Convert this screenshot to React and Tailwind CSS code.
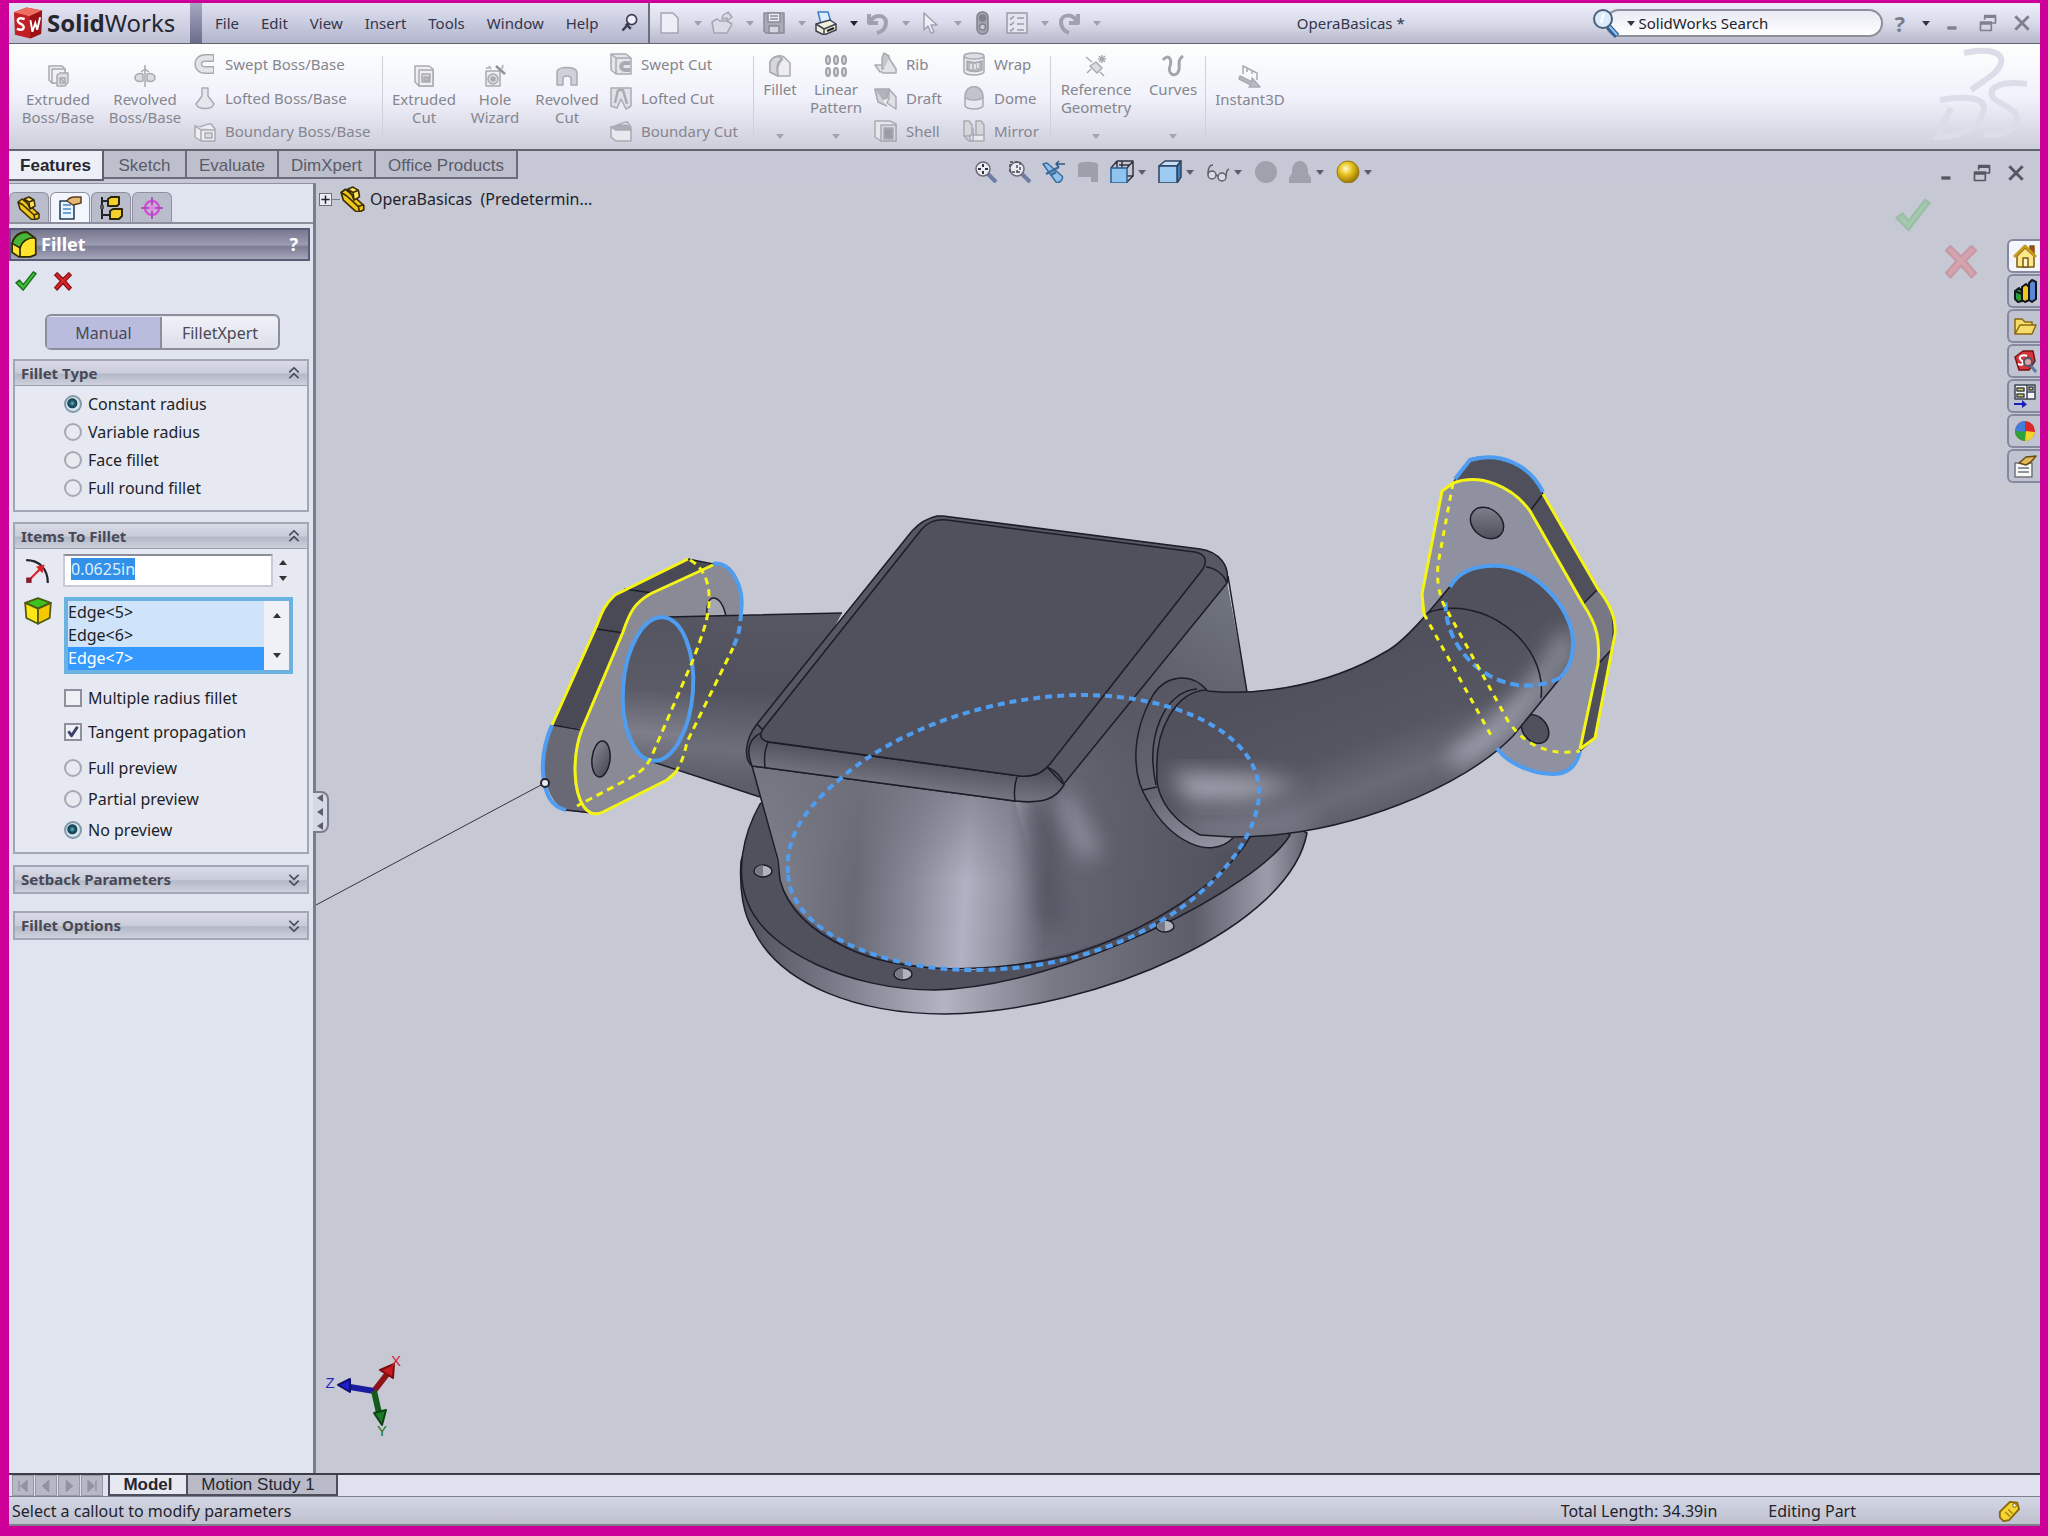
import { useEffect, useRef } from 'react';
import clsx from 'clsx';

/* ---------- small shared pieces ---------- */

function Svg({ size = 'size-6', children, className }) {
  return (
    <svg viewBox="0 0 24 24" fill="none" strokeLinejoin="round" aria-hidden="true" className={clsx('shrink-0', size, className)}>
      {children}
    </svg>
  );
}

function Caret({ className = 'text-[#85868f]' }) {
  return (
    <svg viewBox="0 0 8 5" aria-hidden="true" className={clsx('h-[5px] w-2 shrink-0', className)}>
      <path d="M0 0h8L4 5z" fill="currentColor" />
    </svg>
  );
}

/* ---------- drawings for the ribbon ---------- */

const G = '#a9aab2';
const L = '#dcdde3';

const ribbonIcons = {
  extrude: (
    <g stroke={G} strokeWidth="1.5" fill={L}>
      <path d="M3 2h13l3 3v14H6l-3-3z" fill="#f1f1f5" />
      <path d="M6 5h13v14H6z" fill="#f1f1f5" />
      <path d="M11 11l3-2h8v9l-3 4h-8z" />
      <path d="M14 14h5v5h-5zM14 14l5 5" />
    </g>
  ),
  revolve: (
    <g stroke={G} strokeWidth="1.5">
      <path d="M12 1v22" />
      <path d="M2 14c0-4 4-5 8-4v7c-5 1-8 0-8-3zM22 14c0-4-4-5-8-4v7c5 1 8 0 8-3z" fill={L} />
      <path d="M8 8l4-3 4 3" />
    </g>
  ),
  sweep: (
    <g>
      <path d="M21 6h-9c-9 0-9 12 0 12h9" stroke={G} strokeWidth="8" />
      <path d="M20 6h-8c-9 0-9 12 0 12h8" stroke="#e3e4e9" strokeWidth="5" />
    </g>
  ),
  loft: <path d="M9 2h6v8l6 8c-2 6-16 6-18 0l6-8z" fill="#e6e7ec" stroke={G} strokeWidth="1.5" />,
  boundary: (
    <g stroke={G} strokeWidth="1.5" fill={L}>
      <path d="M2 7c7 3 10-3 16-2l4 5v12H8l-6-4z" fill="#eeeef3" />
      <path d="M2 7l6 4h14M8 11v11" />
      <path d="M12 14h7v5h-7z" />
    </g>
  ),
  extrudeCut: (
    <g stroke={G} strokeWidth="1.5" fill="#eeeef3">
      <path d="M3 2h14l4 3v17H7l-4-4z" />
      <path d="M7 6h14v16H7z" />
      <path d="M10 10h8v8h-8z" fill={L} />
      <path d="M12 13h5v4h-5z" fill="#b9bac2" />
    </g>
  ),
  hole: (
    <g stroke={G} strokeWidth="1.5" fill="#eeeef3">
      <path d="M3 7h14v15H3z" />
      <circle cx="10" cy="15" r="5" fill={L} />
      <circle cx="10" cy="15" r="2" fill={G} />
      <path d="M13 2l9 8" strokeWidth="2.5" stroke="#8f9099" />
      <path d="M6 2l2 3M20 1l-1 4M3 4h3" />
    </g>
  ),
  revolveCut: (
    <path d="M2 8c0-6 19-6 20 0v13h-6v-6c0-4-8-4-8 0v6H2z" fill="#d0d1d8" stroke={G} strokeWidth="1.5" />
  ),
  sweepCut: (
    <g stroke={G} strokeWidth="1.5">
      <path d="M2 2h15l5 4v16H7l-5-4z" fill="#e4e5ea" />
      <path d="M7 6h15M7 6v16M2 2l5 4" />
      <path d="M21 11h-5c-5 0-5 7 0 7h5" strokeWidth="4" />
    </g>
  ),
  loftCut: (
    <g stroke={G} strokeWidth="1.5">
      <path d="M2 2h20v18l-5 3-5-10-4 9-6-2z" fill="#e0e1e7" />
      <path d="M9 4h5l4 14M9 4L6 17" strokeWidth="2.5" />
    </g>
  ),
  boundaryCut: (
    <g stroke={G} strokeWidth="1.5">
      <path d="M2 8c6 0 10-5 16-5l4 5v14H7l-5-4z" fill="#e8e9ee" />
      <path d="M2 8l5 3h15c-2-4-4-5-6-5-5 0-9 2-14 2z" fill="#acadb5" />
    </g>
  ),
  fillet: (
    <g stroke={G} strokeWidth="1.5">
      <path d="M2 8c3-7 10-7 14-5l6 6v13H10l-8-4z" fill="#ececf1" />
      <path d="M2 8c3-6 9-6 12-4l-4 5c-1 3-1 9 0 13l-8-4z" fill="#d6d7dd" />
      <path d="M10 22c-1-9 0-13 5-17" />
    </g>
  ),
  linear: (
    <g stroke="#a0a1aa" strokeWidth="2" fill={L}>
      <ellipse cx="4" cy="6" rx="2" ry="4" />
      <ellipse cx="12" cy="6" rx="2" ry="4" />
      <ellipse cx="20" cy="6" rx="2" ry="4" />
      <ellipse cx="4" cy="18" rx="2" ry="4" />
      <ellipse cx="12" cy="18" rx="2" ry="4" />
      <ellipse cx="20" cy="18" rx="2" ry="4" />
    </g>
  ),
  rib: (
    <g stroke={G} strokeWidth="1.5" fill="#e2e3e9">
      <path d="M1 13l5 7h16l-5-7z" />
      <path d="M10 1l5 3v13H8V6z" fill="#c4c5cd" />
      <path d="M15 6l7 11v4H8" />
    </g>
  ),
  draft: (
    <g stroke={G} strokeWidth="1.5">
      <path d="M1 3h14l-2 9-9 3z" fill="#b2b3bb" />
      <path d="M15 3l7 8v12l-9-6 2-5z" fill="#dfe0e6" />
      <path d="M1 3l3 13 9 4" fill="#d3d4da" />
    </g>
  ),
  shell: (
    <g stroke={G} strokeWidth="1.5">
      <path d="M1 2h15l6 3v17H7l-6-4z" fill="#e6e7ec" />
      <path d="M7 6h15v16H7z" fill="#d8d9df" />
      <path d="M10 9h9v11h-9z" fill="#9b9ca5" />
    </g>
  ),
  wrap: (
    <g stroke={G} strokeWidth="1.5">
      <path d="M2 4v16c3 4 17 4 20 0V4" fill="#ececf1" />
      <ellipse cx="12" cy="4" rx="10" ry="3" fill="#dcdde3" />
      <path d="M5 9c5 2 10 2 15 0v9c-5 2-10 2-15 0z" fill="#b7b8c0" />
      <path d="M9 12v5M13 12v5M16 11v5" stroke="#eee" />
    </g>
  ),
  dome: (
    <g stroke={G} strokeWidth="1.5">
      <path d="M3 11v9c3 4 15 4 18 0v-9" fill="#e8e9ee" />
      <path d="M3 11c0-14 18-14 18 0-3 4-15 4-18 0z" fill="#c3c4cb" />
    </g>
  ),
  mirror: (
    <g stroke={G} strokeWidth="1.5">
      <path d="M2 2h5l3 4v11H2zM14 2h5l3 4v11h-8z" fill="#d6d7dd" />
      <path d="M8 16h14v6H8z" fill="#e8e9ee" />
      <path d="M2 17l5 5h4V9" />
    </g>
  ),
  refGeo: (
    <g stroke={G} strokeWidth="1.5">
      <path d="M6 12l6-4 6 6-5 5z" fill={L} />
      <path d="M2 3l6 5M3 19l4-4M18 1v8M14 5h8M15 2l6 6M21 2l-6 6M16 18l4 4" />
    </g>
  ),
  curves: <path d="M2 6c6-7 9 0 7 6-3 8 6 13 9 4 1-6-2-10 4-14" stroke="#a3a4ad" strokeWidth="3" />,
  instant: (
    <g stroke={G} strokeWidth="1.5">
      <path d="M5 10V2l14 7v7M9 4v4M14 6v4" />
      <path d="M2 12l12 6v-4l8 9H11l2-2-12-6z" fill="#b9bac2" />
    </g>
  ),
};

function BigTool({ icon, lines, width, arrow, low }) {
  return (
    <button type="button" className={clsx('flex shrink-0 flex-col items-center text-center leading-[18px]', width, low ? 'pt-5' : 'pt-[10px]')}>
      <Svg className="mb-[2px]">{ribbonIcons[icon]}</Svg>
      {lines.map((l) => (
        <span key={l} className="whitespace-nowrap">{l}</span>
      ))}
      {arrow && <Caret className="mt-auto mb-[10px] text-[#a3a4ad]" />}
    </button>
  );
}

function SmallTools({ items, className }) {
  return (
    <div className={clsx('flex shrink-0 flex-col justify-between pt-2 pb-[6px]', className)}>
      {items.map(([icon, label]) => (
        <button key={label} type="button" className="flex items-center gap-2 leading-6 whitespace-nowrap">
          <Svg>{ribbonIcons[icon]}</Svg>
          {label}
        </button>
      ))}
    </div>
  );
}

function Divider() {
  return <div className="my-3 w-px shrink-0 bg-[#cfd0da]" />;
}

function Ribbon() {
  return (
    <div className="flex h-[107px] items-stretch border-b-2 border-[#62646f] bg-linear-to-b from-[#fdfffd] via-[#f1f2fb] to-[#cdcedb] text-[15px] text-[#85868e]">
      <BigTool icon="extrude" lines={['Extruded', 'Boss/Base']} width="w-[98px]" low />
      <BigTool icon="revolve" lines={['Revolved', 'Boss/Base']} width="w-[76px]" low />
      <SmallTools
        className="w-[199px] pl-[10px]"
        items={[['sweep', 'Swept Boss/Base'], ['loft', 'Lofted Boss/Base'], ['boundary', 'Boundary Boss/Base']]}
      />
      <Divider />
      <BigTool icon="extrudeCut" lines={['Extruded', 'Cut']} width="w-[82px]" low />
      <BigTool icon="hole" lines={['Hole', 'Wizard']} width="w-[60px]" low />
      <BigTool icon="revolveCut" lines={['Revolved', 'Cut']} width="w-[84px]" low />
      <SmallTools
        className="w-[144px]"
        items={[['sweepCut', 'Swept Cut'], ['loftCut', 'Lofted Cut'], ['boundaryCut', 'Boundary Cut']]}
      />
      <Divider />
      <BigTool icon="fillet" lines={['Fillet']} width="w-[52px]" arrow />
      <BigTool icon="linear" lines={['Linear', 'Pattern']} width="w-[60px]" arrow />
      <SmallTools className="w-[90px] pl-2" items={[['rib', 'Rib'], ['draft', 'Draft'], ['shell', 'Shell']]} />
      <SmallTools className="w-[94px] pl-[6px]" items={[['wrap', 'Wrap'], ['dome', 'Dome'], ['mirror', 'Mirror']]} />
      <Divider />
      <BigTool icon="refGeo" lines={['Reference', 'Geometry']} width="w-[90px]" arrow />
      <BigTool icon="curves" lines={['Curves']} width="w-[64px]" arrow />
      <Divider />
      <BigTool icon="instant" lines={['Instant3D']} width="w-[88px]" low />
      <svg viewBox="0 0 100 104" aria-hidden="true" className="mr-3 ml-auto h-[104px] w-[100px] shrink-0" fill="none" stroke="#dcdde8" strokeWidth="6">
        <path d="M36 9c24-5 40-1 37 10-2 9-12 14-30 27" />
        <path d="M12 56c34-6 48 0 43 13-4 15-22 24-46 24l14-29" />
        <path d="M99 40c-24-3-38 2-35 12 3 8 29 12 25 26-3 10-18 14-34 13" />
      </svg>
    </div>
  );
}

/* ---------- title bar ---------- */

const quickTools = [
  { name: 'New', arrow: true, art: <path d="M3 2h12l5 5v15H3z" fill="#eeeef6" stroke="#a4a5b1" strokeWidth="1.5" /> },
  {
    name: 'Open', arrow: true,
    art: <path d="M2 11l5-3 3 2h7l5 3-5 9H4zM12 8c0-4 3-6 6-6v-1l4 5-5 4V7c-2 0-3 1-5 1z" fill="#d9dae5" stroke="#a4a5b1" strokeWidth="1.5" />,
  },
  {
    name: 'Save', arrow: true,
    art: (
      <g stroke="#8b8c98" strokeWidth="1.5">
        <path d="M2 2h20v20H4l-2-2z" fill="#a9aab6" />
        <path d="M6 2h12v9H6z" fill="#eceef6" />
        <path d="M7 15h10v7H7z" fill="#d4d5df" />
        <path d="M8 5h8M8 8h8" />
      </g>
    ),
  },
  {
    name: 'Print', arrow: true, dark: true,
    art: (
      <g stroke="#3e4150" strokeWidth="1.5">
        <path d="M4 1h10l3 10-10 2z" fill="#dcecff" stroke="#3f7ac4" />
        <path d="M2 13l14-4 6 4v6l-12 5-8-4z" fill="#f1efdc" />
        <path d="M2 13l8 5 12-5M10 18v5" />
        <path d="M13 20l7-3" stroke="#222" strokeWidth="2" />
      </g>
    ),
  },
  { name: 'Undo', arrow: true, art: <path d="M3 3v9h9M4 11c4-8 15-8 16 0 0 6-4 10-9 11" stroke="#a0a1ae" strokeWidth="4" /> },
  { name: 'Select', arrow: true, art: <path d="M6 2v17l4-4 3 7 3-1-3-7h6z" fill="#eeeff7" stroke="#a0a1ae" strokeWidth="1.5" /> },
  {
    name: 'Rebuild',
    art: (
      <g stroke="#80818d" strokeWidth="1.5">
        <rect x="7" y="1" width="11" height="22" rx="5" fill="#a4a5b0" />
        <circle cx="12.500" cy="7" r="3" fill="#7f808c" />
        <circle cx="12.500" cy="16" r="3" fill="#c9cad3" />
      </g>
    ),
  },
  {
    name: 'Options', arrow: true,
    art: (
      <g stroke="#9a9ba8" strokeWidth="1.5">
        <path d="M2 2h20v20H2z" fill="#e4e5ef" />
        <path d="M5 7l1 1 3-3M5 13l1 1 3-3M5 19l1 1 3-3M12 7h7M12 13h7M12 19h7" />
      </g>
    ),
  },
  { name: 'Redo', arrow: true, art: <path d="M21 3v9h-9M20 11C16 2 4 3 4 11c0 5 3 9 8 11" stroke="#a0a1ae" strokeWidth="4" /> },
];

function WindowButtons({ className, color }) {
  return (
    <div className={clsx('flex items-center', className, color)}>
      <button type="button" aria-label="Minimize">
        <Svg size="size-5"><path d="M4 16h11v4H4z" fill="currentColor" /></Svg>
      </button>
      <button type="button" aria-label="Restore">
        <Svg size="size-5">
          <path d="M8 8V3h13v9h-4M3 11h13v10H3zM3 13h13M8 5h13" stroke="currentColor" strokeWidth="2" />
        </Svg>
      </button>
      <button type="button" aria-label="Close">
        <Svg size="size-5"><path d="M4 4l16 16M20 4L4 20" stroke="currentColor" strokeWidth="3.500" /></Svg>
      </button>
    </div>
  );
}

function TitleBar() {
  return (
    <header className="flex h-[41px] items-stretch border-b border-[#5f616c] bg-linear-to-b from-[#eceefb] via-[#d9dbea] to-[#b7b9cc] text-[15px] text-[#34364a]">
      <div className="flex w-[181px] shrink-0 items-center gap-[3px] bg-linear-to-b from-[#e4e5f4] to-[#bfc1d4] pl-1">
        <svg viewBox="0 0 32 34" aria-hidden="true" className="h-[34px] w-[31px] shrink-0">
          <path d="M1 6L14 1l16 3-1 24-11 5L2 29z" fill="#c32026" />
          <path d="M1 6L14 1l16 3-13 6z" fill="#ef6d62" />
          <path d="M17 10l13-6-1 24-11 5z" fill="#9c1218" />
          <path d="M12 13c-8-3-9 3-4 5s4 8-4 5" fill="none" stroke="#fff" strokeWidth="2.500" />
          <path d="M18 14l2 12 3-9 2 7 3-13" fill="none" stroke="#fff" strokeWidth="2" />
        </svg>
        <span className="text-[24px] text-[#25262f]"><b>Solid</b>Works</span>
      </div>
      <div className="w-3 shrink-0 bg-linear-to-b from-[#a6a8c2] to-[#6b6d8c]" />
      <nav className="flex w-[448px] shrink-0 items-center gap-[22px] border-r-2 border-[#6d6f7e] bg-linear-to-b from-[#dfe1f1] to-[#b3b5cd] pl-[13px]">
        {['File', 'Edit', 'View', 'Insert', 'Tools', 'Window', 'Help'].map((m) => (
          <a key={m} href="#menu">{m}</a>
        ))}
        <Svg size="size-5">
          <circle cx="14" cy="8" r="6" fill="#eef" stroke="#3c3e4c" strokeWidth="2" />
          <path d="M11 12l-8 9M7 13l6 6" stroke="#3c3e4c" strokeWidth="3" />
        </Svg>
      </nav>
      <div className="flex shrink-0 items-center pl-2">
        {quickTools.map((t) => (
          <button key={t.name} type="button" aria-label={t.name} className={clsx('flex items-center gap-3', t.arrow ? 'w-[52px]' : 'w-[35px]')}>
            <Svg>{t.art}</Svg>
            {t.arrow && <Caret className={t.dark ? 'text-[#22232c]' : 'text-[#a0a1ae]'} />}
          </button>
        ))}
      </div>
      <span className="mx-auto self-center pr-3 whitespace-nowrap">OperaBasicas *</span>
      <div className="flex shrink-0 items-center">
        <label className="flex h-7 w-[278px] items-center gap-1 rounded-full border-2 border-[#8d8f9c] bg-linear-to-b from-[#e9eaf4] to-white text-[#22232c]">
          <svg viewBox="0 0 32 32" aria-hidden="true" className="-ml-4 size-8 shrink-0" fill="none">
            <path d="M17 19l9 10" stroke="#2c5f92" strokeWidth="6" />
            <path d="M18 19l8 9" stroke="#8ec4ee" strokeWidth="2" />
            <circle cx="12" cy="12" r="9" fill="#dcebfa" stroke="#4b5f7c" strokeWidth="2" />
            <path d="M13 6l-3 10" stroke="#fff" strokeWidth="2" />
          </svg>
          <Caret className="text-[#33353f]" />
          <input aria-label="Search" defaultValue="SolidWorks Search" className="min-w-0 flex-1 bg-transparent outline-none" />
        </label>
        <button type="button" className="ml-3 flex items-center gap-[17px] text-[22px] font-bold text-[#7c7d88]">
          ? <Caret className="text-[#33353f]" />
        </button>
        <WindowButtons className="mr-2 ml-[14px] gap-[14px]" color="text-[#7f808b]" />
      </div>
    </header>
  );
}

/* ---------- command tabs + view toolbar ---------- */

const glass = (
  <g>
    <path d="M14 14l8 8" stroke="#6e7ea6" strokeWidth="4" />
    <circle cx="9" cy="9" r="7" fill="#e9ebf3" stroke="#6a6b76" strokeWidth="1.5" />
  </g>
);

const viewTools = [
  { name: 'Zoom to fit', art: <>{glass}<path d="M9 4v3M9 11v3M4 9h3M11 9h3" stroke="#33343e" strokeWidth="2" /></> },
  { name: 'Zoom to area', art: <>{glass}<path d="M2 2h10v10H2zM9 5v8" stroke="#4b4c57" strokeDasharray="3 2" strokeWidth="1.5" /></> },
  {
    name: 'Previous view',
    art: (
      <>
        <path d="M1 4l4-1 15 13c2 3-3 8-6 6z" fill="#8fc1ec" stroke="#3b6b9c" strokeWidth="1.5" />
        <path d="M4 14l13-7M9 15l5-3" stroke="#3b6b9c" strokeWidth="2.5" />
        <path d="M23 4h-9M17 1l-3 3 3 3" stroke="#2b5688" strokeWidth="1.5" />
      </>
    ),
  },
  { name: 'Section view', art: <path d="M2 4c4-3 16-3 20 0v18h-7v-5H2z" fill="#9d9fab" /> },
  {
    name: 'View orientation', arrow: true,
    art: (
      <g stroke="#343541" strokeWidth="1.5">
        <path d="M7 1h16v15l-6 6M1 8l6-7M17 8l6-7M7 1v7M12 1v7M17 16h6M9 5h10" />
        <path d="M1 8h16v15H1z" fill="#8fc4ee" stroke="#2a5e92" />
      </g>
    ),
  },
  {
    name: 'Display style', arrow: true,
    art: (
      <g stroke="#30435e" strokeWidth="1.5">
        <path d="M1 6l6-5h16l-4 5z" fill="#c3e0f8" />
        <path d="M19 6l4-5v16l-4 6z" fill="#3d7fc0" />
        <path d="M1 6h18v17H1z" fill="#9ecbf1" />
      </g>
    ),
  },
  {
    name: 'Hide/show items', arrow: true,
    art: (
      <g stroke="#5d5f6b" strokeWidth="1.5">
        <circle cx="6" cy="15" r="4" fill="#d7d9e3" />
        <circle cx="16" cy="17" r="4" fill="#d7d9e3" />
        <path d="M2 14c0-6 2-9 5-9M10 15l2 1M20 16c1-5 0-6 3-7" />
      </g>
    ),
  },
  { name: 'Edit appearance', art: <circle cx="12" cy="12" r="11" fill="#9fa1ad" /> },
  { name: 'Apply scene', arrow: true, art: <path d="M4 13C3-3 21-3 20 13l3 5v5H1v-5z" fill="#9fa1ad" /> },
  {
    name: 'View settings', arrow: true,
    art: (
      <>
        <circle cx="12" cy="12" r="11" fill="url(#gold)" stroke="#9a7a1d" />
        <defs>
          <radialGradient id="gold" cx=".4" cy=".35" r=".7">
            <stop offset="0" stopColor="#fffbd0" />
            <stop offset=".4" stopColor="#e9c51f" />
            <stop offset="1" stopColor="#8e6a05" />
          </radialGradient>
        </defs>
      </>
    ),
  },
];

function CommandTabs() {
  return (
    <div className="flex h-8 items-start bg-[#c6c8d5]">
      <div role="tablist" className="flex shrink-0 font-['Liberation_Sans',sans-serif] text-[17px] text-[#5a5b68]">
        <button type="button" role="tab" aria-selected="true" className="h-[30px] w-[95px] border-r-2 border-b-2 border-[#5e6070] bg-[#eceef8] pt-[2px] font-bold text-[#25262f]">
          Features
        </button>
        {[['Sketch', 'w-[83px]'], ['Evaluate', 'w-[92px]'], ['DimXpert', 'w-[97px]'], ['Office Products', 'w-[142px]']].map(([t, w]) => (
          <button key={t} type="button" role="tab" className={clsx('h-7 border-r-2 border-b-2 border-[#6b6d7c] bg-[#bdbfcd] pt-[2px] whitespace-nowrap', w)}>
            {t}
          </button>
        ))}
      </div>
      <div className="ml-auto flex shrink-0 items-center pt-[9px]">
        {viewTools.map((t) => (
          <button key={t.name} type="button" aria-label={t.name} className={clsx('flex items-center gap-1', t.arrow ? 'w-12' : 'w-[34px]')}>
            <Svg>{t.art}</Svg>
            {t.arrow && <Caret className="text-[#5c5d68]" />}
          </button>
        ))}
      </div>
      <WindowButtons className="mr-[14px] ml-auto gap-[14px] pt-3 pl-[98px]" color="text-[#555762]" />
    </div>
  );
}

/* ---------- property manager ---------- */

function PartIcon({ size = 'size-6' }) {
  return (
    <Svg size={size}>
      <g stroke="#3a2d00" strokeWidth="1.5">
        <path d="M1 6l4-3 5 4 12 11v4l-4 2-4-1L3 13z" fill="#f0c51c" />
        <path d="M1 6l5 3 11 10 1 5M17 19l5-2" />
        <path d="M7 3l5-2 5 3 1 6-5 3-2-5z" fill="#ffe35c" />
        <path d="M7 3l5 3 5-2M12 6l1 7" />
      </g>
    </Svg>
  );
}

const propIcon = (
  <g stroke="#1f3a52" strokeWidth="1.5">
    <path d="M2 5h14v18H2z" fill="#e8f4ff" />
    <path d="M5 9h8M5 13h8M5 17h8" stroke="#4a86c0" />
    <path d="M9 5c2-4 6-4 8-4h6v6l-8 2-3-2z" fill="#e6b878" stroke="#5b3d18" />
  </g>
);

function PanelTabs() {
  const tab = 'flex h-[30px] w-10 items-center justify-center rounded-t-md border border-b-0 border-[#8f91a0]';
  return (
    <div role="tablist" className="mt-2 flex gap-px border-b-2 border-[#8d8f9f]">
      <button type="button" role="tab" aria-label="Feature tree" className={clsx(tab, 'bg-[#b9bccb]')}><PartIcon /></button>
      <button type="button" role="tab" aria-label="Properties" aria-selected="true" className={clsx(tab, 'bg-[#f4f6fd]')}>
        <Svg>{propIcon}</Svg>
      </button>
      <button type="button" role="tab" aria-label="Configurations" className={clsx(tab, 'bg-[#b9bccb]')}>
        <Svg>
          <path d="M3 1v22M3 5h7M3 19h7" stroke="#22232b" strokeWidth="2" />
          <path d="M9 3l3-2h8v7l-2 2H9zM11 15l3-2h9v7l-3 3h-9z" fill="#f2cf2b" stroke="#2d2500" strokeWidth="2" />
          <path d="M1 9h4v4H1z" fill="#555" />
        </Svg>
      </button>
      <button type="button" role="tab" aria-label="Dimensions" className={clsx(tab, 'bg-[#b9bccb]')}>
        <Svg>
          <circle cx="12" cy="12" r="7" stroke="#d24fd6" strokeWidth="2.500" />
          <path d="M12 1v22M1 12h22" stroke="#b24fc0" strokeWidth="2" />
          <circle cx="12" cy="12" r="3" fill="#e783e6" />
        </Svg>
      </button>
    </div>
  );
}

function Group({ title, open, children }) {
  return (
    <section className="mx-1 border-2 border-[#a3a6b4] bg-[#e6e8f2]">
      <button
        type="button"
        aria-expanded={Boolean(open)}
        className={clsx(
          'flex h-[25px] w-full items-center justify-between bg-[linear-gradient(#d9dbe7,#c9ccd9_50%,#b4b8c6_55%,#ced1dd)] pr-[6px] pl-[6px] text-[15px] font-bold text-[#474957]',
          open && 'border-b border-[#9a9dab]',
        )}
      >
        {title}
        <Svg size="size-[14px]">
          <path d={open ? 'M4 11l8-8 8 8M4 21l8-8 8 8' : 'M4 3l8 8 8-8M4 13l8 8 8-8'} stroke="#4b4d5a" strokeWidth="3" />
        </Svg>
      </button>
      {children}
    </section>
  );
}

function Radio({ name, label, on }) {
  return (
    <label className="flex items-center gap-[6px] text-[16px] leading-5 text-[#1d1e26]">
      <input
        type="radio"
        name={name}
        defaultChecked={on}
        className="size-[18px] appearance-none rounded-full border-2 border-[#a6a8b3] bg-[#e9eaf0] checked:border-[#8199a8] checked:bg-[radial-gradient(circle_at_45%_45%,#7fb7c4_0,#1f5f70_22%,#123f4e_42%,#d8e4ec_50%)]"
      />
      {label}
    </label>
  );
}

function Check({ label, on }) {
  return (
    <label className="flex items-center gap-[6px] text-[16px] leading-5 text-[#1d1e26]">
      <span className="relative size-[18px]">
        <input type="checkbox" defaultChecked={on} className="block size-[18px] appearance-none border-2 border-[#8e909c] bg-[#eff0f5]" />
        {on && (
          <Svg size="size-[18px]" className="pointer-events-none absolute inset-0">
            <path d="M6 11l4 6 8-12" stroke="#3d3f6c" strokeWidth="4" />
          </Svg>
        )}
      </span>
      {label}
    </label>
  );
}

function OkMark({ size, fill = '#3fbf3a', stroke = '#1c6d1e' }) {
  return (
    <Svg size={size}>
      <path d="M1 14l4-3 4 5L20 2l3 2L9 22z" fill={fill} stroke={stroke} strokeWidth="1.500" />
    </Svg>
  );
}

function CancelMark({ size, fill = '#d8242a', stroke = '#8a1013' }) {
  return (
    <Svg size={size}>
      <path d="M2 5l3-3 7 7 7-7 3 3-7 7 7 8-3 3-7-8-7 8-3-3 7-8z" fill={fill} stroke={stroke} strokeWidth="1.500" />
    </Svg>
  );
}

function RadiusField() {
  const ref = useRef(null);
  useEffect(() => {
    ref.current.focus();
    ref.current.select();
  }, []);
  return (
    <div className="flex items-center">
      <Svg size="size-[26px]" className="mr-[13px]">
        <path d="M2 2c12 0 20 8 20 21" stroke="#22232b" strokeWidth="2" />
        <path d="M5 20L16 9" stroke="#d8242a" strokeWidth="2" />
        <path d="M11 8l8-2-2 8z" fill="#d8242a" />
        <path d="M2 18h5v5H2z" fill="#8a1a2c" />
      </Svg>
      <input
        ref={ref}
        aria-label="Radius"
        defaultValue="0.0625in"
        className="h-[33px] w-[210px] border-2 border-t-[#8b8d99] border-r-[#c9cbd8] border-b-[#c9cbd8] border-l-[#c9cbd8] bg-white pb-[3px] pl-[6px] text-[16px] leading-5 outline-none selection:bg-[#3390e8] selection:text-[#dff0ff]"
      />
      <div className="ml-[6px] flex flex-col gap-[11px]">
        <button type="button" aria-label="Increase" className="rotate-180"><Caret className="text-[#333]" /></button>
        <button type="button" aria-label="Decrease"><Caret className="text-[#333]" /></button>
      </div>
    </div>
  );
}

function EdgeList() {
  return (
    <div className="mt-[10px] flex items-start">
      <Svg size="size-7" className="mr-3">
        <g stroke="#4d5a10" strokeWidth="1.500">
          <path d="M1 5l11-4 11 4-11 5z" fill="#3cc21e" />
          <path d="M1 5l11 5v13L2 18z" fill="#ffe619" />
          <path d="M23 5l-11 5v13l10-5z" fill="#f5c800" />
        </g>
      </Svg>
      <div className="flex h-[77px] w-[229px] border-4 border-[#6cb2e0] bg-[#cfe4fa]">
        <select
          multiple
          size={3}
          aria-label="Edges"
          defaultValue={['Edge<7>']}
          className="h-full flex-1 appearance-none overflow-hidden border-0 bg-transparent p-0 text-[16px] text-[#1d1e26] outline-none [scrollbar-width:none]"
        >
          {['Edge<5>', 'Edge<6>', 'Edge<7>'].map((e) => (
            <option key={e} className="h-[23px] min-h-[23px] p-0 leading-[23px] checked:bg-[linear-gradient(#3399ff,#3399ff)] checked:text-white">{e}</option>
          ))}
        </select>
        <div className="flex w-[25px] flex-col items-center justify-between bg-[#f0f1f6] py-3">
          <button type="button" aria-label="Scroll up" className="rotate-180"><Caret className="text-[#333]" /></button>
          <button type="button" aria-label="Scroll down"><Caret className="text-[#333]" /></button>
        </div>
      </div>
    </div>
  );
}

function PropertyPanel() {
  return (
    <aside className="relative z-10 flex w-[307px] shrink-0 flex-col border-t border-r-[3px] border-t-[#8f919f] border-r-[#7b7d8c] bg-[#e0e4ee]">
      <PanelTabs />
      <div className="mt-1 mr-[3px] flex h-[33px] items-center border-2 border-[#5b5b76] bg-[linear-gradient(#77778f,#9b9bb2_50%,#7c7c95_58%,#a5a5bb)] text-white">
        <Svg size="size-[27px]" className="mr-[3px]">
          <g stroke="#2d2a00" strokeWidth="1.500">
            <path d="M1 11C3 4 8 1 14 1l8 6v14l-5 2H7l-6-4z" fill="#ffe42b" />
            <path d="M1 11C3 4 8 1 14 1l7 5c-6 0-11 3-13 9z" fill="#48b53a" />
            <path d="M8 15v8" />
          </g>
        </Svg>
        <h2 className="text-[18px] font-bold">Fillet</h2>
        <button type="button" className="mr-[10px] ml-auto text-[18px] font-bold">?</button>
      </div>
      <div className="mt-2 ml-[6px] flex h-6 items-center gap-4">
        <button type="button" aria-label="OK"><OkMark size="size-[22px]" /></button>
        <button type="button" aria-label="Cancel"><CancelMark size="size-5" /></button>
      </div>
      <div className="mt-[21px] ml-9 flex h-9 w-[235px] shrink-0 rounded-md border-2 border-[#8c8e9c] pt-px text-[16px] text-[#474957]">
        <button type="button" className="w-[115px] border-r-2 border-[#8c8e9c] bg-[#b9bcdd]">Manual</button>
        <button type="button" className="flex-1 rounded-r-md bg-linear-to-b from-[#f1f2f8] to-[#dcdee9]">FilletXpert</button>
      </div>

      <div className="mt-[9px] flex flex-col">
        <Group title="Fillet Type" open>
          <div className="flex flex-col gap-2 pt-2 pb-3 pl-[49px]">
            <Radio name="type" label="Constant radius" on />
            <Radio name="type" label="Variable radius" />
            <Radio name="type" label="Face fillet" />
            <Radio name="type" label="Full round fillet" />
          </div>
        </Group>
        <div className="h-[10px]" />
        <Group title="Items To Fillet" open>
          <div className="pt-[5px] pb-3 pl-[9px]">
            <RadiusField />
            <EdgeList />
            <div className="mt-[14px] ml-10 flex flex-col gap-[14px]">
              <Check label="Multiple radius fillet" />
              <Check label="Tangent propagation" on />
            </div>
            <div className="mt-4 ml-10 flex flex-col gap-[11px]">
              <Radio name="preview" label="Full preview" />
              <Radio name="preview" label="Partial preview" />
              <Radio name="preview" label="No preview" on />
            </div>
          </div>
        </Group>
        <div className="h-[11px]" />
        <Group title="Setback Parameters" />
        <div className="h-[17px]" />
        <Group title="Fillet Options" />
      </div>

      <button
        type="button"
        aria-label="Collapse panel"
        className="absolute top-[607px] -right-4 flex h-[42px] w-4 flex-col items-center justify-center gap-[6px] rounded-r-lg border-2 border-l-0 border-[#7b7d8c] bg-[#d5d8e5]"
      >
        <i className="border-y-4 border-r-[6px] border-y-transparent border-r-[#5c5e6b]" />
        <i className="border-y-4 border-r-[6px] border-y-transparent border-r-[#5c5e6b]" />
        <i className="border-y-4 border-r-[6px] border-y-transparent border-r-[#5c5e6b]" />
      </button>
    </aside>
  );
}

/* ---------- the 3D part ---------- */

const BLUE = '#4f9df0';
const YEL = '#f4f416';

function Model() {
  return (
    <svg viewBox="316 182 1724 1290" preserveAspectRatio="xMinYMin meet" className="absolute inset-0 size-full" fill="none" strokeLinejoin="round" aria-label="OperaBasicas model">
      <defs>
        <linearGradient id="rim" gradientUnits="userSpaceOnUse" x1="740" y1="0" x2="1307" y2="0">
          <stop offset="0" stopColor="#4e4f5b" />
          <stop offset=".16" stopColor="#777986" />
          <stop offset=".36" stopColor="#b2b4c3" />
          <stop offset=".55" stopColor="#777985" />
          <stop offset=".8" stopColor="#5c5d69" />
          <stop offset=".93" stopColor="#9b9dab" />
          <stop offset="1" stopColor="#62636f" />
        </linearGradient>
        <linearGradient id="body" gradientUnits="userSpaceOnUse" x1="760" y1="860" x2="1240" y2="890">
          <stop offset="0" stopColor="#82838f" />
          <stop offset=".2" stopColor="#686975" />
          <stop offset=".32" stopColor="#888a98" />
          <stop offset=".43" stopColor="#b0b2c3" />
          <stop offset=".52" stopColor="#9092a0" />
          <stop offset=".6" stopColor="#666774" />
          <stop offset=".75" stopColor="#5d5e6a" />
          <stop offset="1" stopColor="#4f505c" />
        </linearGradient>
        <linearGradient id="bodyTop" gradientUnits="userSpaceOnUse" x1="0" y1="770" x2="0" y2="880">
          <stop offset="0" stopColor="#70717d" stopOpacity=".75" />
          <stop offset="1" stopColor="#70717d" stopOpacity="0" />
        </linearGradient>
        <linearGradient id="side" gradientUnits="userSpaceOnUse" x1="1100" y1="800" x2="1230" y2="600">
          <stop offset="0" stopColor="#5b5c68" stopOpacity="0" />
          <stop offset=".4" stopColor="#575863" />
          <stop offset="1" stopColor="#6f737e" />
        </linearGradient>
        <linearGradient id="lip" gradientUnits="userSpaceOnUse" x1="880" y1="752" x2="876" y2="786">
          <stop offset="0" stopColor="#50515d" />
          <stop offset="1" stopColor="#777883" />
        </linearGradient>
        <linearGradient id="pipeL" gradientUnits="userSpaceOnUse" x1="700" y1="610" x2="690" y2="780">
          <stop offset="0" stopColor="#565762" />
          <stop offset=".45" stopColor="#50515c" />
          <stop offset=".8" stopColor="#6c6e79" />
          <stop offset="1" stopColor="#5c5d69" />
        </linearGradient>
        <linearGradient id="boreL" gradientUnits="userSpaceOnUse" x1="0" y1="615" x2="0" y2="762">
          <stop offset="0" stopColor="#53545f" />
          <stop offset=".5" stopColor="#5a5b67" />
          <stop offset=".8" stopColor="#7d7e8a" />
          <stop offset="1" stopColor="#666773" />
        </linearGradient>
        <linearGradient id="pipeR" gradientUnits="userSpaceOnUse" x1="1320" y1="680" x2="1370" y2="815">
          <stop offset="0" stopColor="#50515c" />
          <stop offset=".5" stopColor="#555661" />
          <stop offset=".8" stopColor="#696a76" />
          <stop offset="1" stopColor="#5d5e6a" />
        </linearGradient>
        <linearGradient id="ring" gradientUnits="userSpaceOnUse" x1="1150" y1="690" x2="1210" y2="845">
          <stop offset="0" stopColor="#555661" />
          <stop offset=".6" stopColor="#666773" />
          <stop offset="1" stopColor="#9092a0" />
        </linearGradient>
        <linearGradient id="hole" x1="0" y1="0" x2="1" y2="1">
          <stop offset="0" stopColor="#888996" />
          <stop offset="1" stopColor="#444550" />
        </linearGradient>
        <filter id="soft" x="-50%" y="-50%" width="200%" height="200%">
          <feGaussianBlur stdDeviation="11" />
        </filter>
        <clipPath id="bodyClip">
          <path d="M752 765L783 769 1015 800C1040 802 1055 798 1063 784L1227 582 1247 690 1255 800C1258 850 1170 950 973 969 900 970 800 940 780 879L777 859z" />
        </clipPath>
        <clipPath id="pipeClip">
          <path d="M1207 690C1247 693 1320 690 1387 650 1405 640 1430 610 1452 583 1473 560 1510 560 1537 582 1565 605 1585 640 1562 675L1513 735C1467 783 1350 836 1233 836L1200 834C1165 815 1155 790 1157 770 1155 730 1175 690 1207 690z" />
        </clipPath>
      </defs>

      {/* base plate */}
      <g stroke="#1d1d29" strokeWidth="1.5">
        <path d="M741 860C739 890 744 915 753 928 780 985 860 1013 945 1013 1100 1010 1290 925 1307 832L1250 800 760 805z" fill="url(#rim)" />
        <path d="M760 803C742 835 736 872 747 900 765 950 850 989 935 989 1070 985 1260 885 1290 834L1240 780 780 790z" fill="#50515c" />
        {[[763, 870], [903, 973], [1165, 925]].map(([cx, cy]) => (
          <g key={cx}>
            <ellipse cx={cx} cy={cy} rx="9" ry="6" fill="#b2b3bd" />
            <path d={`M${cx - 8} ${cy}a8 6 0 0 1 8-6v11a8 6 0 0 1-8-5z`} fill="#777884" stroke="none" />
          </g>
        ))}
      </g>

      {/* left inlet and its flange */}
      <g stroke="#1d1d29" strokeWidth="1.5">
        <path d="M688 558L713 564 717 562C735 560 742 585 742 600 742 630 737 640 733 645L687 741C682 760 676 770 667 779L600 812C590 815 580 812 577 797 570 760 575 745 582 728L623 631C630 610 635 602 650 593z" fill="#898a96" stroke="none" />
        <path d="M707 614C705 590 722 592 726 616" fill="#a6a7b2" />
        <path d="M668 616L842 612 790 710 760 796 650 760z" fill="url(#pipeL)" stroke="none" />
        <path d="M668 616L842 612M650 760L760 796" />
        <ellipse cx="658" cy="688" rx="35" ry="72" transform="rotate(4 658 688)" fill="url(#boreL)" stroke="none" />
        <path d="M688 558L713 564 650 593C635 602 630 610 623 631L582 728 552 724 597 624C602 608 608 598 615 594z" fill="#494a55" stroke="none" />
        <path d="M552 724L582 728C574 745 570 775 578 797 582 808 588 812 593 813L565 809C542 797 538 755 552 724z" fill="#686975" stroke="none" />
        <path d="M552 724l30 5M597 628l27 4M624 588l29 4M688 558l25 5M565 809l28 3" />
        <ellipse cx="601" cy="758" rx="9" ry="18" transform="rotate(6 601 758)" fill="url(#hole)" />
      </g>

      {/* box body */}
      <path d="M752 765L783 769 1015 800C1040 802 1055 798 1063 784L1227 582 1247 690 1255 800C1258 850 1170 950 973 969 900 970 800 940 780 879L777 859z" fill="url(#body)" />
      <g clipPath="url(#bodyClip)">
        <path d="M752 765L1015 800 1040 890 760 890z" fill="url(#bodyTop)" />
        <path d="M1063 784L1227 582 1260 700 1260 840 1130 880z" fill="url(#side)" />
        <path d="M1028 795L1050 800 1062 930 1040 920z" fill="#4d4e5a" opacity=".8" filter="url(#soft)" />
        <path d="M1056 798L1068 790 1100 850 1082 860z" fill="#a6a8b7" opacity=".75" filter="url(#soft)" />
      </g>
      <g stroke="#1d1d29" strokeWidth="1.5">
        <path d="M752 765L778 859 780 879C788 910 815 932 847 947 900 972 980 974 1067 955 1150 930 1225 880 1250 836M1228 575L1247 691" />
        <path d="M937 515C928 517 920 521 912 530L757 723C744 740 744 758 752 765L1015 800C1045 803 1056 796 1063 784L1227 582C1230 565 1220 551 1200 548L943 515z" fill="#565762" />
        <path d="M752 765C744 745 752 735 764 731L767 741 1020 775C1035 776 1042 772 1047 766L1064 784C1056 797 1045 803 1015 800z" fill="url(#lip)" />
        <path d="M947 519C935 518 928 521 921 529L763 728C758 736 762 740 770 741L1020 775C1035 776 1042 772 1050 763L1203 568C1208 559 1205 553 1195 551z" fill="#50515c" />
        <path d="M1047 766C1056 770 1062 776 1064 784M1017 776c-3 8-3 16-2 24M768 742c-4 8-4 16-3 24M1206 566C1215 567 1224 573 1227 582M757 723l6 6" />
      </g>

      {/* right flange */}
      <g stroke="#1d1d29" strokeWidth="1.5">
        <path d="M1453 482L1470 458C1500 450 1530 466 1543 493L1598 588C1612 605 1616 620 1615 633L1595 737 1580 750 1500 600z" fill="#4f505b" />
        <path d="M1453 482C1480 472 1512 485 1530 510L1583 603C1598 625 1600 640 1598 663L1580 748C1578 765 1565 773 1553 773 1525 773 1505 760 1497 747L1424 613 1422 593 1442 490z" fill="#9091a0" stroke="none" />
        <path d="M1583 603L1598 588C1612 605 1616 620 1612 648L1599 662C1601 638 1596 622 1583 603z" fill="#777884" />
        <path d="M1530 510l13-17" />
        <ellipse cx="1487" cy="522" rx="18" ry="14" transform="rotate(38 1487 522)" fill="url(#hole)" />
        <ellipse cx="1535" cy="728" rx="16" ry="12" transform="rotate(50 1535 728)" fill="#50515c" />
      </g>

      {/* outlet pipe */}
      <path d="M1207 689C1190 670 1165 675 1153 694 1130 735 1132 775 1148 800 1170 840 1210 860 1233 837z" fill="url(#ring)" />
      <path d="M1207 690C1247 693 1320 690 1387 650 1405 640 1430 610 1452 583 1473 560 1510 560 1537 582 1565 605 1585 640 1562 675L1513 735C1467 783 1350 836 1233 836L1200 834C1165 815 1155 790 1157 770 1155 730 1175 690 1207 690z" fill="url(#pipeR)" />
      <g clipPath="url(#pipeClip)">
        <path d="M1170 772L1250 775 1300 782 1250 798 1190 800z" fill="#b6b8c6" opacity=".85" filter="url(#soft)" />
        <path d="M1180 815L1310 808 1310 840 1190 838z" fill="#7f8190" opacity=".6" filter="url(#soft)" />
        <path d="M1448 755C1490 725 1530 690 1545 660L1556 668C1540 700 1500 745 1456 768z" fill="#b4b6c4" opacity=".9" filter="url(#soft)" />
        <path d="M1545 660C1555 640 1566 615 1576 640L1560 676z" fill="#a4a6b4" opacity=".8" filter="url(#soft)" />
      </g>
      <g stroke="#1d1d29" strokeWidth="1.5">
        <path d="M1207 690C1247 694 1320 690 1387 650 1405 640 1430 610 1452 583M1200 834L1233 836C1350 836 1467 783 1513 735L1562 675" />
        <path d="M1427 612C1480 592 1548 640 1541 697" />
        <path d="M1207 689C1190 670 1165 675 1153 694 1130 735 1132 775 1148 800 1170 840 1210 860 1233 837M1200 834C1165 815 1155 790 1157 770 1155 730 1175 690 1207 689" />
        <path d="M1197 688C1165 690 1145 735 1156 784M1143 789l14-3" />
      </g>

      {/* selected edges */}
      <g stroke={BLUE} strokeWidth="4">
        <path d="M788 872C786 845 795 815 840 778 900 725 1000 694 1083 694 1180 694 1259 735 1259 791 1259 860 1150 969 973 969 880 969 790 930 788 872z" strokeDasharray="7 5" />
        <path d="M552 724C545 740 542 755 543 772 545 795 552 806 566 809" />
        <path d="M713 563C730 559 745 585 741 612" />
        <path d="M741 612C740 630 738 635 733 647" strokeDasharray="8 5" />
        <ellipse cx="658" cy="688" rx="35" ry="72" transform="rotate(4 658 688)" />
        <path d="M1455 478L1470 459C1500 450 1530 464 1543 491" />
        <path d="M1450 586C1460 568 1480 564 1500 565 1545 570 1573 615 1573 640 1573 660 1568 668 1560 677" />
        <path d="M1560 677C1500 705 1440 650 1446 596" strokeDasharray="9 5" />
        <path d="M1497 747C1505 760 1530 773 1553 773 1570 773 1577 763 1580 750" />
      </g>
      <g stroke={YEL} strokeWidth="3">
        <path d="M688 558L615 594C606 602 602 610 597 624L552 724" />
        <path d="M713 564L650 593C635 602 630 610 623 631L582 728C572 755 573 790 584 806 590 814 597 814 603 811L667 779 675 772" />
        <path d="M675 772C683 760 685 750 687 741L733 647" strokeDasharray="7 5" />
        <path d="M690 559C706 568 710 585 709 603 708 620 700 640 693 659L653 752C648 764 643 770 630 777L577 805" strokeDasharray="7 5" />
        <path d="M1424 613L1422 593 1442 490 1453 482C1480 472 1512 485 1530 510L1583 603C1598 625 1600 640 1598 663L1580 748" />
        <path d="M1543 493L1598 588C1612 605 1616 620 1615 633L1595 737 1580 748" />
        <path d="M1424 613L1493 738" strokeDasharray="6 6" />
        <path d="M1453 482L1438 563C1437 580 1438 588 1443 602L1508 720C1525 745 1550 755 1580 750" strokeDasharray="6 6" />
      </g>

      {/* callout leader */}
      <path d="M316 904L541 784" stroke="#33343e" strokeWidth="1" />
      <circle cx="545" cy="782" r="4" fill="#e8e9f0" stroke="#22232c" strokeWidth="2" />

      {/* axis triad */}
      <g fontFamily="Liberation Sans, sans-serif" fontSize="15" textAnchor="middle">
        <path d="M374 1390l14-18" stroke="#8f1218" strokeWidth="6" />
        <path d="M394 1363l-14 6 13 8z" fill="#c81a20" stroke="#7c0c10" strokeWidth="2" />
        <path d="M374 1390l-24-4" stroke="#1b1ba0" strokeWidth="6" />
        <path d="M338 1384l12-6v13z" fill="#2020c8" stroke="#101070" strokeWidth="2" />
        <path d="M374 1390l5 22" stroke="#145a1c" strokeWidth="6" />
        <path d="M382 1424l-8-12 12-3z" fill="#1d7a28" stroke="#0e4414" strokeWidth="2" />
        <text x="330" y="1387" fill="#2a2ac0">Z</text>
        <text x="396" y="1365" fill="#d0203a">X</text>
        <text x="382" y="1435" fill="#1d7a28">Y</text>
      </g>
    </svg>
  );
}

const taskTabs = [
  {
    name: 'Resources',
    art: (
      <g stroke="#7a5a10" strokeWidth="1.500">
        <path d="M17 2h4v9h-4z" fill="#b5431c" />
        <path d="M4 12l8-8 9 8v11H4z" fill="#ffe88a" />
        <path d="M1 13L12 2l11 11" strokeWidth="3" stroke="#c79a1c" />
        <path d="M10 14h5v9h-5z" fill="#fff6c8" />
      </g>
    ),
  },
  {
    name: 'Design library',
    art: (
      <g stroke="#15161c" strokeWidth="2">
        <path d="M2 12l4-3 3 3v10l-4 1-3-3z" fill="#2f9c3a" />
        <path d="M9 8l4-3 3 3v13l-4 2-3-2z" fill="#f0c51c" />
        <path d="M16 4l3-3 4 2v17l-4 3-3-2z" fill="#5c86d6" />
        <path d="M2 12l7 3M9 8v14M16 4v17" />
      </g>
    ),
  },
  { name: 'File explorer', art: <path d="M2 20V5h7l3 3h7v3h4l-4 9zM2 20l5-9h15" fill="#f7dc6a" stroke="#8a6a12" strokeWidth="1.500" /> },
  {
    name: 'Search',
    art: (
      <g>
        <path d="M2 8l8-6h10l2 10-6 9H6z" fill="#d5353b" stroke="#7b1216" strokeWidth="1.500" />
        <path d="M5 15c5 2 7-1 3-4s2-6 6-4" stroke="#fff" strokeWidth="2" />
        <circle cx="15" cy="13" r="4" fill="#e6a0a4" stroke="#4d586e" strokeWidth="2" />
        <path d="M18 17l5 6" stroke="#5d7ba6" strokeWidth="3" />
      </g>
    ),
  },
  {
    name: 'View palette',
    art: (
      <g stroke="#3d4450" strokeWidth="1.500">
        <path d="M2 1h20v14H2zM14 1v14M14 8h8" fill="#f4f6fb" />
        <path d="M4 4h7v3H4zM4 10h7v3H4zM16 3h4v3h-4z" fill="#d8cf5a" />
        <path d="M1 19h8v-3l5 4.500-5 3.500v-3H1z" fill="#1c22b8" stroke="none" />
      </g>
    ),
  },
  {
    name: 'Appearances',
    art: (
      <g>
        <circle cx="12" cy="12" r="10" fill="#d9272d" />
        <path d="M12 2A10 10 0 002 12l10 2z" fill="#3f7fd8" />
        <path d="M2 12a10 10 0 0010 10l2-9z" fill="#2fa23a" />
        <path d="M12 22a10 10 0 0010-9l-9-1z" fill="#f2d32a" />
      </g>
    ),
  },
  {
    name: 'Custom properties',
    art: (
      <g stroke="#6f7480" strokeWidth="1.500">
        <path d="M2 9h17v14H2z" fill="#f6f8f6" />
        <path d="M5 14h11M5 18h11" />
        <path d="M6 9l7-6 10-1-5 6-5 3z" fill="#e2b65a" stroke="#6a4a14" />
      </g>
    ),
  },
];

function GraphicsArea() {
  return (
    <main className="relative min-w-0 flex-1 overflow-hidden bg-[#c6c8d4]">
      <Model />
      <div className="relative flex items-start justify-between">
        <div className="flex h-8 items-center pl-[3px] text-[16px] text-[#22232c]">
          <button type="button" aria-label="Expand tree" className="flex size-[13px] items-center justify-center border border-[#6c6e7a] bg-[#eceef5]">
            <Svg size="size-[9px]"><path d="M12 1v22M1 12h22" stroke="#22232c" strokeWidth="4" /></Svg>
          </button>
          <i className="w-2 border-t border-[#7f818d]" />
          <PartIcon size="size-[26px]" />
          <span className="pl-1 whitespace-pre">OperaBasicas  (Predetermin...</span>
        </div>
        <div className="flex items-start">
          <div className="flex items-start gap-3 pt-[14px] pr-7">
            <button type="button" aria-label="Accept"><OkMark size="size-9" fill="#a5c9ae" stroke="#9bbfa6" /></button>
            <button type="button" aria-label="Discard" className="mt-[46px]"><CancelMark size="size-9" fill="#d3a3ae" stroke="#c79aa6" /></button>
          </div>
          <div role="tablist" className="flex flex-col gap-px pt-14">
            {taskTabs.map((t, i) => (
              <button
                key={t.name}
                type="button"
                role="tab"
                aria-label={t.name}
                className={clsx('flex h-[34px] w-[33px] items-center justify-center rounded-l-md border-2 border-r-0 border-[#8688a0]', i === 0 ? 'bg-[#f4f6fd]' : 'bg-[#c0c3d0]')}
              >
                <Svg>{t.art}</Svg>
              </button>
            ))}
          </div>
        </div>
      </div>
    </main>
  );
}

/* ---------- footer ---------- */

function Footer() {
  const nav = ['M6 4v16M18 4v16l-9-8z', 'M16 4v16l-9-8z', 'M8 4v16l9-8z', 'M18 4v16M6 4v16l9-8z'];
  return (
    <footer>
      <div className="flex h-6 items-stretch border-t-2 border-b border-t-[#3b3d49] border-b-[#7d7f8c] bg-[#e0e3ef] font-['Liberation_Sans',sans-serif] text-[17px] leading-[18px] text-[#25262f]">
        <div className="flex w-24 gap-px pl-[3px]">
          {nav.map((d) => (
            <button key={d} type="button" aria-label="Scroll tabs" className="flex w-[22px] items-center justify-center border border-[#9698a6] bg-[#b6b8c6]">
              <Svg size="size-4"><path d={d} fill="#9193a2" stroke="#9193a2" strokeWidth="2" /></Svg>
            </button>
          ))}
        </div>
        <button type="button" className="ml-[3px] w-20 border-x-2 border-b-2 border-[#4d4f5c] bg-[#e6e8f2] font-bold">Model</button>
        <button type="button" className="w-[150px] border-r-2 border-b-2 border-[#4d4f5c] bg-[#b9bbc9] pr-2">Motion Study 1</button>
      </div>
      <div className="flex h-[29px] items-center border-b-2 border-[#7e808c] bg-linear-to-b from-[#d3d6e4] to-[#bfc1cf] pl-[3px] text-[16px] text-[#22232c]">
        <span>Select a callout to modify parameters</span>
        <span className="mr-[51px] ml-auto">Total Length: 34.39in</span>
        <span className="mr-[142px]">Editing Part</span>
        <button type="button" aria-label="Tags" className="mr-5">
          <Svg size="size-[22px]">
            <path d="M2 13L13 2l8 1 2 7-11 12-6 1-4-4z" fill="#f3d433" stroke="#8a6808" strokeWidth="2" />
            <path d="M8 13l5 5M11 10l5 5" stroke="#a9850f" strokeWidth="1.500" />
            <circle cx="18" cy="6" r="2" fill="#fff" stroke="#6d520a" />
          </Svg>
        </button>
      </div>
    </footer>
  );
}

export default function App() {
  return (
    <div className="flex min-h-screen flex-col bg-[#cc0099] pt-[3px] pr-2 pb-[10px] pl-[9px] font-['Noto_Sans',sans-serif]">
      <TitleBar />
      <Ribbon />
      <CommandTabs />
      <div className="flex flex-1">
        <PropertyPanel />
        <GraphicsArea />
      </div>
      <Footer />
    </div>
  );
}
